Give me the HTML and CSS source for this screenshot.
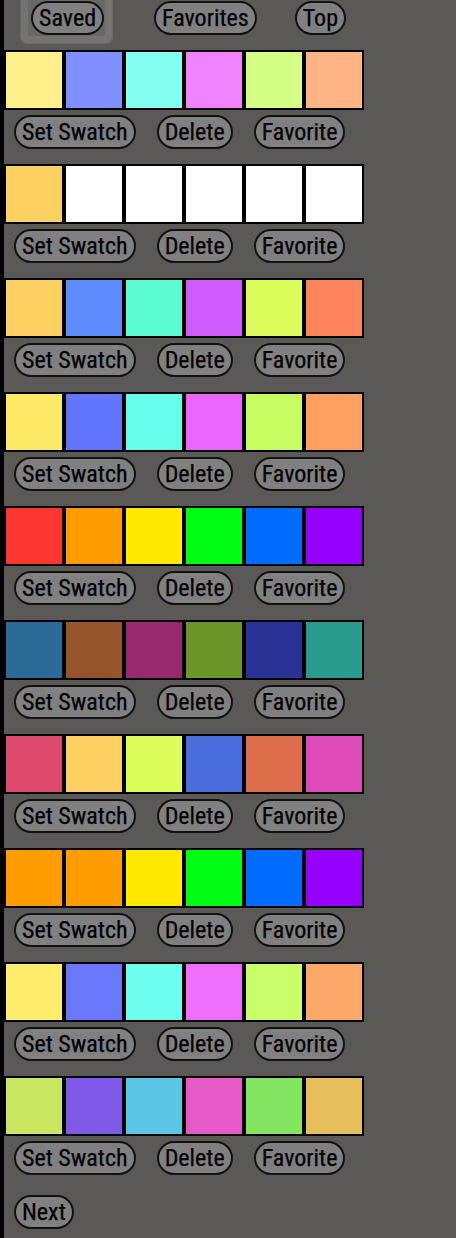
FILE: index.html
```html
<!DOCTYPE html>
<html lang="en">
<head>
<meta charset="utf-8">
<title>Saved Palettes</title>
<link rel="stylesheet" href="styles.css">
</head>
<body>
<div class="page">
  <nav class="nav">
    <span class="focus"><button class="btn">Saved</button></span>
    <button class="btn nav-fav">Favorites</button>
    <button class="btn nav-top">Top</button>
  </nav>

  <section class="entry">
    <div class="palette">
      <div class="sw" style="background:#fdf08a"></div><div class="sw" style="background:#8090ff"></div><div class="sw" style="background:#84fef0"></div><div class="sw" style="background:#f084fe"></div><div class="sw" style="background:#d4fe84"></div><div class="sw" style="background:#feb484"></div>
    </div>
    <div class="actions"><button class="btn">Set Swatch</button><button class="btn">Delete</button><button class="btn">Favorite</button></div>
  </section>

  <section class="entry">
    <div class="palette">
      <div class="sw" style="background:#fdd062"></div><div class="sw" style="background:#ffffff"></div><div class="sw" style="background:#ffffff"></div><div class="sw" style="background:#ffffff"></div><div class="sw" style="background:#ffffff"></div><div class="sw" style="background:#ffffff"></div>
    </div>
    <div class="actions"><button class="btn">Set Swatch</button><button class="btn">Delete</button><button class="btn">Favorite</button></div>
  </section>

  <section class="entry">
    <div class="palette">
      <div class="sw" style="background:#fdd062"></div><div class="sw" style="background:#5c8cfd"></div><div class="sw" style="background:#5cfdd2"></div><div class="sw" style="background:#d05cfd"></div><div class="sw" style="background:#dcfd5c"></div><div class="sw" style="background:#fd845c"></div>
    </div>
    <div class="actions"><button class="btn">Set Swatch</button><button class="btn">Delete</button><button class="btn">Favorite</button></div>
  </section>

  <section class="entry">
    <div class="palette">
      <div class="sw" style="background:#fde966"></div><div class="sw" style="background:#6276fd"></div><div class="sw" style="background:#66fdea"></div><div class="sw" style="background:#ea66fd"></div><div class="sw" style="background:#c8fd62"></div><div class="sw" style="background:#fda062"></div>
    </div>
    <div class="actions"><button class="btn">Set Swatch</button><button class="btn">Delete</button><button class="btn">Favorite</button></div>
  </section>

  <section class="entry">
    <div class="palette">
      <div class="sw" style="background:#fd3632"></div><div class="sw" style="background:#ff9c00"></div><div class="sw" style="background:#ffea00"></div><div class="sw" style="background:#00ff14"></div><div class="sw" style="background:#006cff"></div><div class="sw" style="background:#9600ff"></div>
    </div>
    <div class="actions"><button class="btn">Set Swatch</button><button class="btn">Delete</button><button class="btn">Favorite</button></div>
  </section>

  <section class="entry">
    <div class="palette">
      <div class="sw" style="background:#2a6a96"></div><div class="sw" style="background:#96542a"></div><div class="sw" style="background:#962a6c"></div><div class="sw" style="background:#6c962a"></div><div class="sw" style="background:#2a3296"></div><div class="sw" style="background:#2a9a8e"></div>
    </div>
    <div class="actions"><button class="btn">Set Swatch</button><button class="btn">Delete</button><button class="btn">Favorite</button></div>
  </section>

  <section class="entry">
    <div class="palette">
      <div class="sw" style="background:#de4a6e"></div><div class="sw" style="background:#fdd062"></div><div class="sw" style="background:#dcfd5c"></div><div class="sw" style="background:#4a6ede"></div><div class="sw" style="background:#de6e4a"></div><div class="sw" style="background:#de4ab8"></div>
    </div>
    <div class="actions"><button class="btn">Set Swatch</button><button class="btn">Delete</button><button class="btn">Favorite</button></div>
  </section>

  <section class="entry">
    <div class="palette">
      <div class="sw" style="background:#ff9c00"></div><div class="sw" style="background:#ff9c00"></div><div class="sw" style="background:#ffea00"></div><div class="sw" style="background:#00ff14"></div><div class="sw" style="background:#006cff"></div><div class="sw" style="background:#9600ff"></div>
    </div>
    <div class="actions"><button class="btn">Set Swatch</button><button class="btn">Delete</button><button class="btn">Favorite</button></div>
  </section>

  <section class="entry">
    <div class="palette">
      <div class="sw" style="background:#ffee6e"></div><div class="sw" style="background:#6a78fe"></div><div class="sw" style="background:#6efeee"></div><div class="sw" style="background:#ee6efe"></div><div class="sw" style="background:#c8fe6a"></div><div class="sw" style="background:#fea86a"></div>
    </div>
    <div class="actions"><button class="btn">Set Swatch</button><button class="btn">Delete</button><button class="btn">Favorite</button></div>
  </section>

  <section class="entry">
    <div class="palette">
      <div class="sw" style="background:#cae660"></div><div class="sw" style="background:#7e5ae6"></div><div class="sw" style="background:#5ac6e6"></div><div class="sw" style="background:#e65ac8"></div><div class="sw" style="background:#84e660"></div><div class="sw" style="background:#e6be5c"></div>
    </div>
    <div class="actions"><button class="btn">Set Swatch</button><button class="btn">Delete</button><button class="btn">Favorite</button></div>
  </section>

  <div class="pager"><button class="btn">Next</button></div>
</div>
</body>
</html>
```

FILE: styles.css
```css
html, body {
  margin: 0;
  padding: 0;
  background: #5a5955;
}

.page {
  min-height: 100vh;
  border-left: 4px solid #000;
  box-sizing: border-box;
}

.btn {
  font-family: "Roboto Condensed", Roboto, sans-serif;
  font-stretch: 85%;
  font-weight: 400;
  font-size: 24px;
  line-height: 28px;
  color: #000;
  -webkit-text-stroke: 0.25px #000;
  background: #808080;
  border: 2px solid #111;
  border-radius: 999px;
  padding: 1px 6px;
  margin: 0;
  height: 34px;
  box-sizing: border-box;
  cursor: pointer;
  white-space: nowrap;
}

.nav {
  display: flex;
  align-items: flex-start;
  height: 50px;
  padding: 1px 0 0 27px;
  box-sizing: border-box;
}

.focus {
  display: inline-flex;
  padding: 2px 1px 1px 3px;
  margin: -2px -1px -1px -3px;
  background: #686866;
  border-radius: 2px;
  box-shadow: 0 0 0 7px #737371, 0 0 1px 8px #6c6c69;
}

.nav-fav { margin-left: 50px; }
.nav-top { margin-left: 38px; }

.palette {
  display: flex;
}

.sw {
  width: 56px;
  height: 56px;
  border: 2px solid #000;
}

.actions {
  display: flex;
  gap: 21px;
  padding: 5px 0 15px 10px;
}

.pager {
  padding: 5px 0 0 10px;
}
```
